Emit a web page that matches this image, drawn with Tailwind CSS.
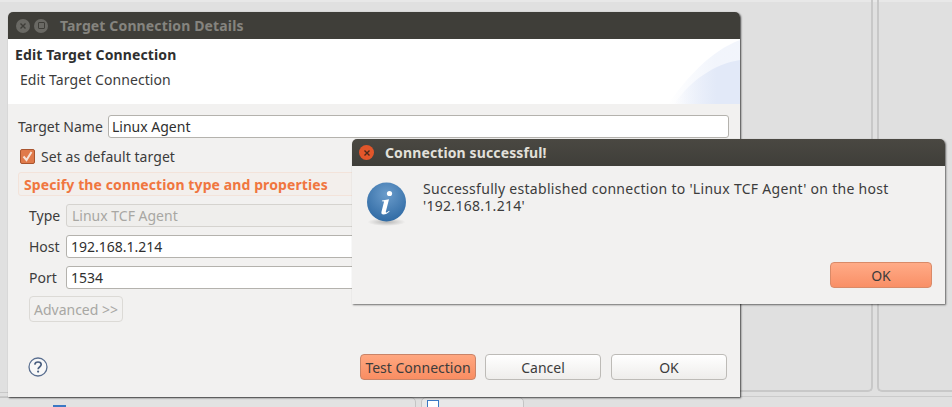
<!DOCTYPE html>
<html lang="en">
<head>
  <meta charset="UTF-8" />
  <title>Target Connection Details</title>
  <script src="https://cdn.jsdelivr.net/npm/@tailwindcss/browser@4"></script>
</head>
<body class="relative w-[952px] h-[407px] overflow-hidden bg-[#e0e0e0] font-['Noto_Sans',sans-serif] text-[14px] text-[#3c3c3c]">
  <!-- Workbench behind the dialogs -->
  <div class="absolute left-0 right-0 top-0 h-[2px] bg-[#e8e8e8]"></div>
  <div class="absolute left-[700px] top-0 w-[173px] h-[392px] border-r-2 border-b-2 border-[#c8c8c8] rounded-br-[5px]"></div>
  <div class="absolute left-[877px] top-0 w-[90px] h-[392px] border-l-2 border-b-2 border-[#c8c8c8] rounded-bl-[5px]"></div>
  <div class="absolute left-0 top-[392px] w-[10px] h-[1px] bg-[#c8c8c8]"></div>
  <div class="absolute left-0 right-0 top-[396px] h-[1px] bg-[#cbcbcb]"></div>
  <div class="absolute left-[-10px] top-[397px] w-[426px] h-[14px] border border-[#c4c4c4] rounded-t-[5px] bg-[#e2e2e2]"></div>
  <div class="absolute left-[421px] top-[397px] w-[103px] h-[14px] border border-[#c4c4c4] rounded-t-[5px] bg-[#e8e8e8]">
    <div class="ml-[5px] mt-[2px] w-[12px] h-[10px] border border-[#3b78c4] bg-white"></div>
  </div>
  <div class="absolute left-[53px] top-[405px] w-[13px] h-[2px] bg-[#3b78c4]"></div>

  <!-- Target Connection Details -->
  <div class="absolute left-[8px] top-[12px] w-[732px] h-[385px] flex flex-col bg-[#f2f1f0] rounded-t-[5px] shadow-[1px_1px_2px_rgba(0,0,0,0.7)]">
    <div class="h-[27px] shrink-0 flex items-center bg-[#3f3e39] rounded-t-[5px] pl-[8px]">
      <span class="w-[14px] h-[14px] rounded-full bg-[#6a6964] flex items-center justify-center">
        <svg width="8" height="8" viewBox="0 0 8 8"><path d="M1.5 1.5l5 5M6.5 1.5l-5 5" stroke="#3f3e39" stroke-width="1.4"/></svg>
      </span>
      <span class="ml-[4px] w-[14px] h-[14px] rounded-full bg-[#6a6964] flex items-center justify-center">
        <span class="w-[7px] h-[7px] border border-[#3f3e39] rounded-[1px]"></span>
      </span>
      <span class="ml-[12px] font-bold text-[14px] tracking-[0.14px] text-[#85847f]">Target Connection Details</span>
    </div>
    <div class="relative h-[65px] shrink-0 bg-white overflow-hidden">
      <svg class="absolute right-0 top-0" width="72" height="65" viewBox="0 0 72 65">
        <defs>
          <linearGradient id="swoosh" x1="0" x2="1" y1="0" y2="0">
            <stop offset="0" stop-color="#e2e9f8" stop-opacity="0"/>
            <stop offset="0.65" stop-color="#e2e9f8"/>
          </linearGradient>
        </defs>
        <path d="M0 65C18 40 42 12 72 1V65Z" fill="url(#swoosh)" opacity="0.45"/>
        <path d="M6 65C22 42 46 25 72 21V65Z" fill="url(#swoosh)"/>
      </svg>
      <div class="absolute left-[7px] top-[6px] font-bold text-[14px] tracking-[0.13px] leading-[19px] text-[#2f2f2f]">Edit Target Connection</div>
      <div class="absolute left-[12px] top-[30px] tracking-[0.08px]">Edit Target Connection</div>
    </div>
    <div class="flex-1 flex flex-col px-[10px] pt-[11px] pb-[17px]">
      <div class="flex items-center h-[23px]">
        <span class="w-[90px]">Target Name</span>
        <div class="w-[621px] h-[23px] bg-white border border-[#b4b2ad] rounded-[3px] pl-[3px] flex items-center text-[#2f2f2f]">Linux Agent</div>
      </div>
      <div class="flex items-center h-[16px] mt-[10px] ml-[2px]">
        <span class="w-[15px] h-[15px] rounded-[2px] bg-[#e07a4a] border border-[#a9552f] flex items-center justify-center">
          <svg width="13" height="13" viewBox="0 0 13 13"><path d="M2.5 6.5l3 3.5 5-8" fill="none" stroke="#f6e3d8" stroke-width="2"/></svg>
        </span>
        <span class="ml-[6px] tracking-[0.06px]">Set as default target</span>
      </div>
      <div class="mt-[8px] h-[24px] w-[345px] border border-[#f3e3da] rounded-[3px] bg-[#f3efec] pl-[5px] flex items-center font-bold text-[14px] tracking-[0.1px] text-[#f0763f]">Specify the connection type and properties</div>
      <div class="flex items-center h-[23px] mt-[8px] ml-[11px]">
        <span class="w-[37px]">Type</span>
        <div class="w-[300px] h-[23px] border border-[#d5d3cf] rounded-[3px] pl-[5px] flex items-center text-[#a8a7a3] bg-[#efeeec]">Linux TCF Agent</div>
      </div>
      <div class="flex items-center h-[23px] mt-[8px] ml-[11px]">
        <span class="w-[37px]">Host</span>
        <div class="w-[300px] h-[23px] bg-white border border-[#b4b2ad] rounded-[3px] pl-[4px] flex items-center text-[#2f2f2f]">192.168.1.214</div>
      </div>
      <div class="flex items-center h-[23px] mt-[8px] ml-[11px]">
        <span class="w-[37px]">Port</span>
        <div class="w-[300px] h-[23px] bg-white border border-[#b4b2ad] rounded-[3px] pl-[4px] flex items-center text-[#2f2f2f]">1534</div>
      </div>
      <div class="ml-[11px] mt-[7px] w-[94px] h-[26px] pt-[1px] border border-[#dcdad6] rounded-[4px] flex items-center justify-center text-[#a8a7a3]">Advanced &gt;&gt;</div>
      <div class="mt-auto flex items-center">
        <svg class="ml-[10px]" width="20" height="20" viewBox="0 0 20 20">
          <circle cx="10" cy="10" r="9" fill="#f8f8f8" stroke="#5a6f90" stroke-width="1.3"/>
          <path d="M6.8 7.6C7 5.7 8.4 5 10 5c1.8 0 3.2 1 3.2 2.6 0 2.4-3.1 2.4-3.1 4.6" fill="none" stroke="#4a5f80" stroke-width="1.7"/>
          <circle cx="10.1" cy="14.6" r="1.1" fill="#4a5f80"/>
        </svg>
        <button class="ml-auto w-[116px] h-[26px] rounded-[4px] border border-[#c98468] bg-gradient-to-b from-[#ffa780] to-[#f98d62]">Test Connection</button>
        <button class="ml-[9px] w-[116px] h-[26px] rounded-[4px] border border-[#bdbbb7] bg-gradient-to-b from-white to-[#eeedeb]">Cancel</button>
        <button class="ml-[10px] w-[116px] h-[26px] rounded-[4px] border border-[#bdbbb7] bg-gradient-to-b from-white to-[#eeedeb]">OK</button>
        <span class="w-[3px]"></span>
      </div>
    </div>
  </div>

  <!-- Connection successful! -->
  <div class="absolute left-[352px] top-[139px] w-[593px] h-[165px] flex flex-col bg-[#f2f1f0] rounded-t-[5px] shadow-[1px_1px_2px_rgba(0,0,0,0.55)]">
    <div class="h-[27px] shrink-0 flex items-center bg-gradient-to-b from-[#4a4842] to-[#3f3e39] rounded-t-[5px] pl-[7px]">
      <span class="w-[15px] h-[15px] rounded-full bg-[#e2562a] flex items-center justify-center">
        <svg width="8" height="8" viewBox="0 0 8 8"><path d="M1.5 1.5l5 5M6.5 1.5l-5 5" stroke="#4a2a1c" stroke-width="1.4"/></svg>
      </span>
      <span class="ml-[11px] font-bold text-[14px] tracking-[0.12px] text-[#e2e0da]">Connection successful!</span>
    </div>
    <div class="relative flex-1 flex pl-[15px] pt-[16px]">
      <svg class="shrink-0" width="39" height="48" viewBox="0 0 39 48">
        <defs>
          <radialGradient id="info" cx="0.5" cy="0.3" r="0.8">
            <stop offset="0" stop-color="#6b9ccb"/>
            <stop offset="1" stop-color="#28649f"/>
          </radialGradient>
          <radialGradient id="infoshadow">
            <stop offset="0" stop-color="#000" stop-opacity="0.25"/>
            <stop offset="1" stop-color="#000" stop-opacity="0"/>
          </radialGradient>
        </defs>
        <ellipse cx="19.5" cy="40" rx="19" ry="4" fill="url(#infoshadow)"/>
        <circle cx="19.5" cy="20" r="19.5" fill="url(#info)"/>
        <circle cx="22.5" cy="11.5" r="2.6" fill="#fff"/>
        <path d="M15 18.5l7-1.2-3.2 12.5c-.2.8.4 1 1 .6l2.4-1.6.3.8c-2 1.8-3.8 3-6 3-1.8 0-2.4-1.1-2-2.8l2.6-10.2-2.2-.4z" fill="#fff"/>
      </svg>
      <div class="ml-[17px] mt-[-2px] w-[500px] leading-[17px] text-[14px] tracking-[0.29px]">Successfully established connection to 'Linux TCF Agent' on the host '192.168.1.214'</div>
      <button class="absolute right-[13px] bottom-[16px] w-[102px] h-[26px] rounded-[4px] border border-[#d98a68] bg-gradient-to-b from-[#ffab87] to-[#f98f66]">OK</button>
    </div>
  </div>
</body>
</html>
